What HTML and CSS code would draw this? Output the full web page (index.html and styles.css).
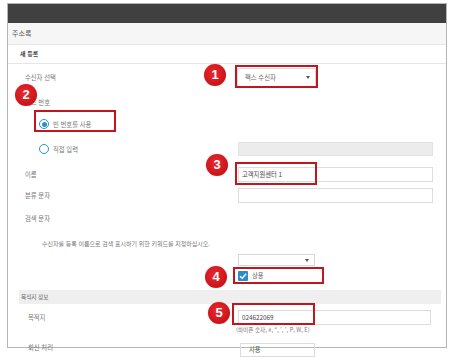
FILE: index.html
```html
<!DOCTYPE html>
<html lang="ko">
<head>
<meta charset="utf-8">
<title>주소록</title>
<link rel="stylesheet" href="styles.css">
</head>
<body>
<div class="page">
  <div class="frame">
    <div class="topbar"></div>
    <div class="title">주소록</div>
    <div class="subtitle">새 등록</div>
    <div class="form">
      <div class="row r1">
        <div class="label">수신자 선택</div>
        <div class="ctrl"><div class="select sel-main">팩스 수신자<span class="caret"></span></div></div>
      </div>
      <div class="row r2">
        <div class="label">팩스 번호</div>
      </div>
      <div class="row r3">
        <div class="radio-line"><span class="radio on"></span><span class="rtext">빈 번호를 사용</span></div>
      </div>
      <div class="row r4">
        <div class="radio-line"><span class="radio"></span><span class="rtext">직접 입력</span></div>
        <div class="ctrl"><div class="input disabled"></div></div>
      </div>
      <div class="row r5">
        <div class="label">이름</div>
        <div class="ctrl"><div class="input filled">고객지원센터 1</div></div>
      </div>
      <div class="row r6">
        <div class="label">분류 문자</div>
        <div class="ctrl"><div class="input"></div></div>
      </div>
      <div class="row r7">
        <div class="label">검색 문자</div>
      </div>
      <div class="desc">수신자를 등록 이름으로 검색 표시하기 위한 키워드를 지정하십시오.</div>
      <div class="row r9">
        <div class="label"></div>
        <div class="ctrl"><div class="select sel-small"><span class="caret"></span></div></div>
      </div>
      <div class="row r10">
        <div class="label"></div>
        <div class="ctrl check-line">
          <span class="checkbox"><svg viewBox="0 0 10 10" width="10" height="10"><path d="M2 5.2 L4.2 7.3 L8.2 2.8" fill="none" stroke="#fff" stroke-width="1.4"/></svg></span>
          <span class="ctext">상용</span>
        </div>
      </div>
      <div class="band">목적지 정보</div>
      <div class="row r11">
        <div class="label sub">목적지</div>
        <div class="ctrl"><div class="input dest filled">024622069</div></div>
      </div>
      <div class="row r12">
        <div class="label"></div>
        <div class="ctrl helper">(하이픈 숫자, #, *, ', ', P, W, E)</div>
      </div>
      <div class="row r13">
        <div class="label sub">회신 처리</div>
        <div class="ctrl"><div class="input small-in">사용</div></div>
      </div>
    </div>
  </div>

  <div class="mark box b1"></div>
  <div class="mark box b2"></div>
  <div class="mark box b3"></div>
  <div class="mark box b4"></div>
  <div class="mark box b5"></div>
  <div class="mark num n1">1</div>
  <div class="mark num n2">2</div>
  <div class="mark num n3">3</div>
  <div class="mark num n4">4</div>
  <div class="mark num n5">5</div>
</div>
</body>
</html>
```

FILE: styles.css
```css
* { box-sizing: border-box; }
html, body { margin: 0; padding: 0; background: #fff; }
body {
  font-family: "Noto Sans CJK KR", "Noto Sans", sans-serif;
  color: #777;
  width: 456px;
  height: 357px;
  overflow: hidden;
}
.page { position: relative; width: 456px; height: 357px; padding: 3px 0 0 7px; }

.frame {
  width: 440px;
  height: 345px;
  border: 1px solid #b5b5b5;
  background: #fff;
}
.topbar { height: 19px; background: #404040; }
.title {
  height: 22px;
  background: #f6f6f6;
  border-bottom: 1px solid #e6e6e6;
  padding-left: 4px;
  font-size: 7px;
  line-height: 21px;
  color: #555;
}
.subtitle {
  height: 19px;
  border-bottom: 1px solid #e6e6e6;
  padding-left: 12px;
  font-size: 6px;
  line-height: 18px;
  color: #444;
  font-weight: bold;
}

.form { font-size: 6.3px; }
.row {
  display: grid;
  grid-template-columns: 230px 200px;
  align-items: center;
}
.label { padding-left: 17px; color: #777; }
.label.sub { padding-left: 20px; }
.r1 { height: 26px; }
.r2 { height: 24px; }
.r3 { height: 20px; }
.r4 { height: 30px; }
.r5 { height: 20px; }
.r6 { height: 23px; }
.r7 { height: 22px; }
.desc {
  height: 25px;
  padding: 5px 0 0 34px;
  line-height: 20px;
  font-size: 6px;
  color: #777;
}
.r9 { height: 12px; align-items: start; }
.r10 { height: 19px; }
.r11 { height: 21px; padding-top: 6px; }
.r12 { height: 10px; }
.r13 { height: 22px; padding-top: 8px; align-items: start; }

.radio-line { display: flex; align-items: center; padding-left: 31px; }
.radio {
  width: 10px; height: 10px;
  border: 1.5px solid #2b8fcb;
  border-radius: 50%;
  display: inline-flex; align-items: center; justify-content: center;
  background: #fff;
}
.radio.on::after {
  content: "";
  width: 5px; height: 5px;
  border-radius: 50%;
  background: #2b8fcb;
}
.rtext { margin-left: 4px; color: #777; }

.select {
  position: relative;
  border: 1px solid #d8d8d8;
  background: #fff;
  color: #666;
}
.sel-main { width: 79px; height: 19px; margin-left: -1px; line-height: 17px; padding-left: 7px; }
.sel-small { width: 77px; height: 12px; }
.caret {
  position: absolute;
  right: 5px;
  top: 50%;
  margin-top: -1px;
  border-top: 3px solid #555;
  border-left: 2px solid transparent;
  border-right: 2px solid transparent;
}

.input {
  width: 195px;
  height: 15px;
  border: 1px solid #dcdcdc;
  background: #fff;
  line-height: 13px;
  padding-left: 3px;
  color: #555;
}
.input.disabled { background: #ececec; border-color: #e2e2e2; height: 14px; }
.input.filled { color: #444; }
.input.dest { width: 193px; padding-left: 3px; }
.input.small-in { width: 75px; height: 14px; margin-left: 2px; background: transparent; padding-left: 8px; line-height: 12px; }

.check-line { display: flex; align-items: center; }
.checkbox {
  width: 10px; height: 10px;
  background: #2b8ccc;
  border-radius: 1px;
  display: inline-flex;
}
.checkbox svg { display: block; }
.ctext { margin-left: 4px; color: #666; }

.band {
  margin: 5px 0 0 11px;
  width: 422px;
  height: 14px;
  background: #efefef;
  padding-left: 2px;
  font-size: 5.6px;
  line-height: 14px;
  color: #666;
}
.helper { font-size: 5.6px; color: #777; margin-left: -2px; white-space: nowrap; }

/* annotations */
.mark { position: absolute; }
.box { border: 2px solid #c1161d; }
.b1 { left: 235px; top: 65px; width: 83px; height: 23px; }
.b2 { left: 34px; top: 110px; width: 82px; height: 22px; }
.b3 { left: 235px; top: 162px; width: 82px; height: 23px; }
.b4 { left: 233px; top: 267px; width: 91px; height: 17px; }
.b5 { left: 232px; top: 303px; width: 83px; height: 22px; }
.num {
  width: 22px; height: 22px;
  border-radius: 50%;
  background: radial-gradient(circle at 45% 40%, #ea2a2e 0%, #d0161c 60%, #a90f14 100%);
  color: #fff;
  font-family: "Liberation Sans", Arial, sans-serif;
  font-weight: bold;
  font-size: 13px;
  line-height: 22px;
  text-align: center;
  box-shadow: 0 0 1px rgba(0,0,0,0.3);
}
.n1 { left: 204px; top: 64px; }
.n2 { left: 15px; top: 84px; }
.n3 { left: 206px; top: 154px; }
.n4 { left: 205px; top: 266px; }
.n5 { left: 208px; top: 302px; }
```
